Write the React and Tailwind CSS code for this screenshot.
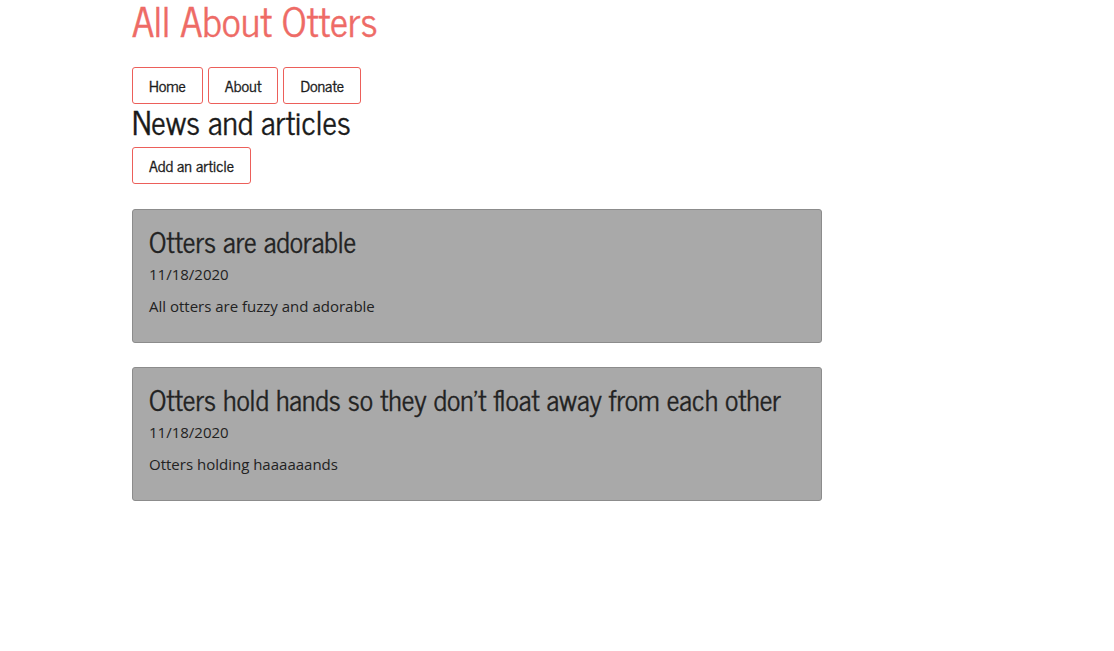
import React from 'react';

const HEAD_FONT = "font-['News_Cycle','Liberation_Sans_Narrow','DejaVu_Sans_Condensed',sans-serif] [-webkit-text-stroke:0.35px]";
const BODY_FONT = "font-['Open_Sans','Noto_Sans',sans-serif]";

const articles = [
    {
        title: 'Otters are adorable',
        date: '11/18/2020',
        body: 'All otters are fuzzy and adorable',
    },
    {
        title: 'Otters hold hands so they don\u2019t float away from each other',
        date: '11/18/2020',
        body: 'Otters holding haaaaaands',
    },
];

const NavButton = ({ children }) => (
    <button className={`h-[37px] px-4 pb-[2px] border border-[#ec5f5a] rounded-[3px] bg-white text-[16px] text-[#1a1a1a] ${HEAD_FONT}`}>
        {children}
    </button>
);

const ArticleCard = ({ article }) => (
    <div className="w-[690px] h-[134px] bg-[#a9a9a9] border border-[#8c8c8c] rounded-[3px] px-4 pt-4">
        <h3 className={`text-[28px] leading-[30px] text-[#222] ${HEAD_FONT}`}>{article.title}</h3>
        <p className={`text-[15px] leading-5 mt-[8px] text-[#222] ${BODY_FONT}`}>{article.date}</p>
        <p className={`text-[15px] leading-5 mt-3 text-[#222] ${BODY_FONT}`}>{article.body}</p>
    </div>
);

export default function App() {
    return (
        <div className="min-h-[651px] bg-white">
            <div className="ml-[132px] w-[690px]">
                <h1 className={`text-[40px] leading-[40px] text-[#ee6b66] ${HEAD_FONT}`}>All About Otters</h1>
                <nav className="flex gap-[5px] mt-[27px]">
                    <NavButton>Home</NavButton>
                    <NavButton>About</NavButton>
                    <NavButton>Donate</NavButton>
                </nav>
                <h2 className={`text-[32px] leading-[34px] text-[#1a1a1a] ${HEAD_FONT}`}>News and articles</h2>
                <div className="mt-[9px]">
                    <NavButton>Add an article</NavButton>
                </div>
                <div className="flex flex-col gap-[24px] mt-[25px]">
                    {articles.map((a, i) => (
                        <ArticleCard key={i} article={a} />
                    ))}
                </div>
            </div>
        </div>
    );
}
